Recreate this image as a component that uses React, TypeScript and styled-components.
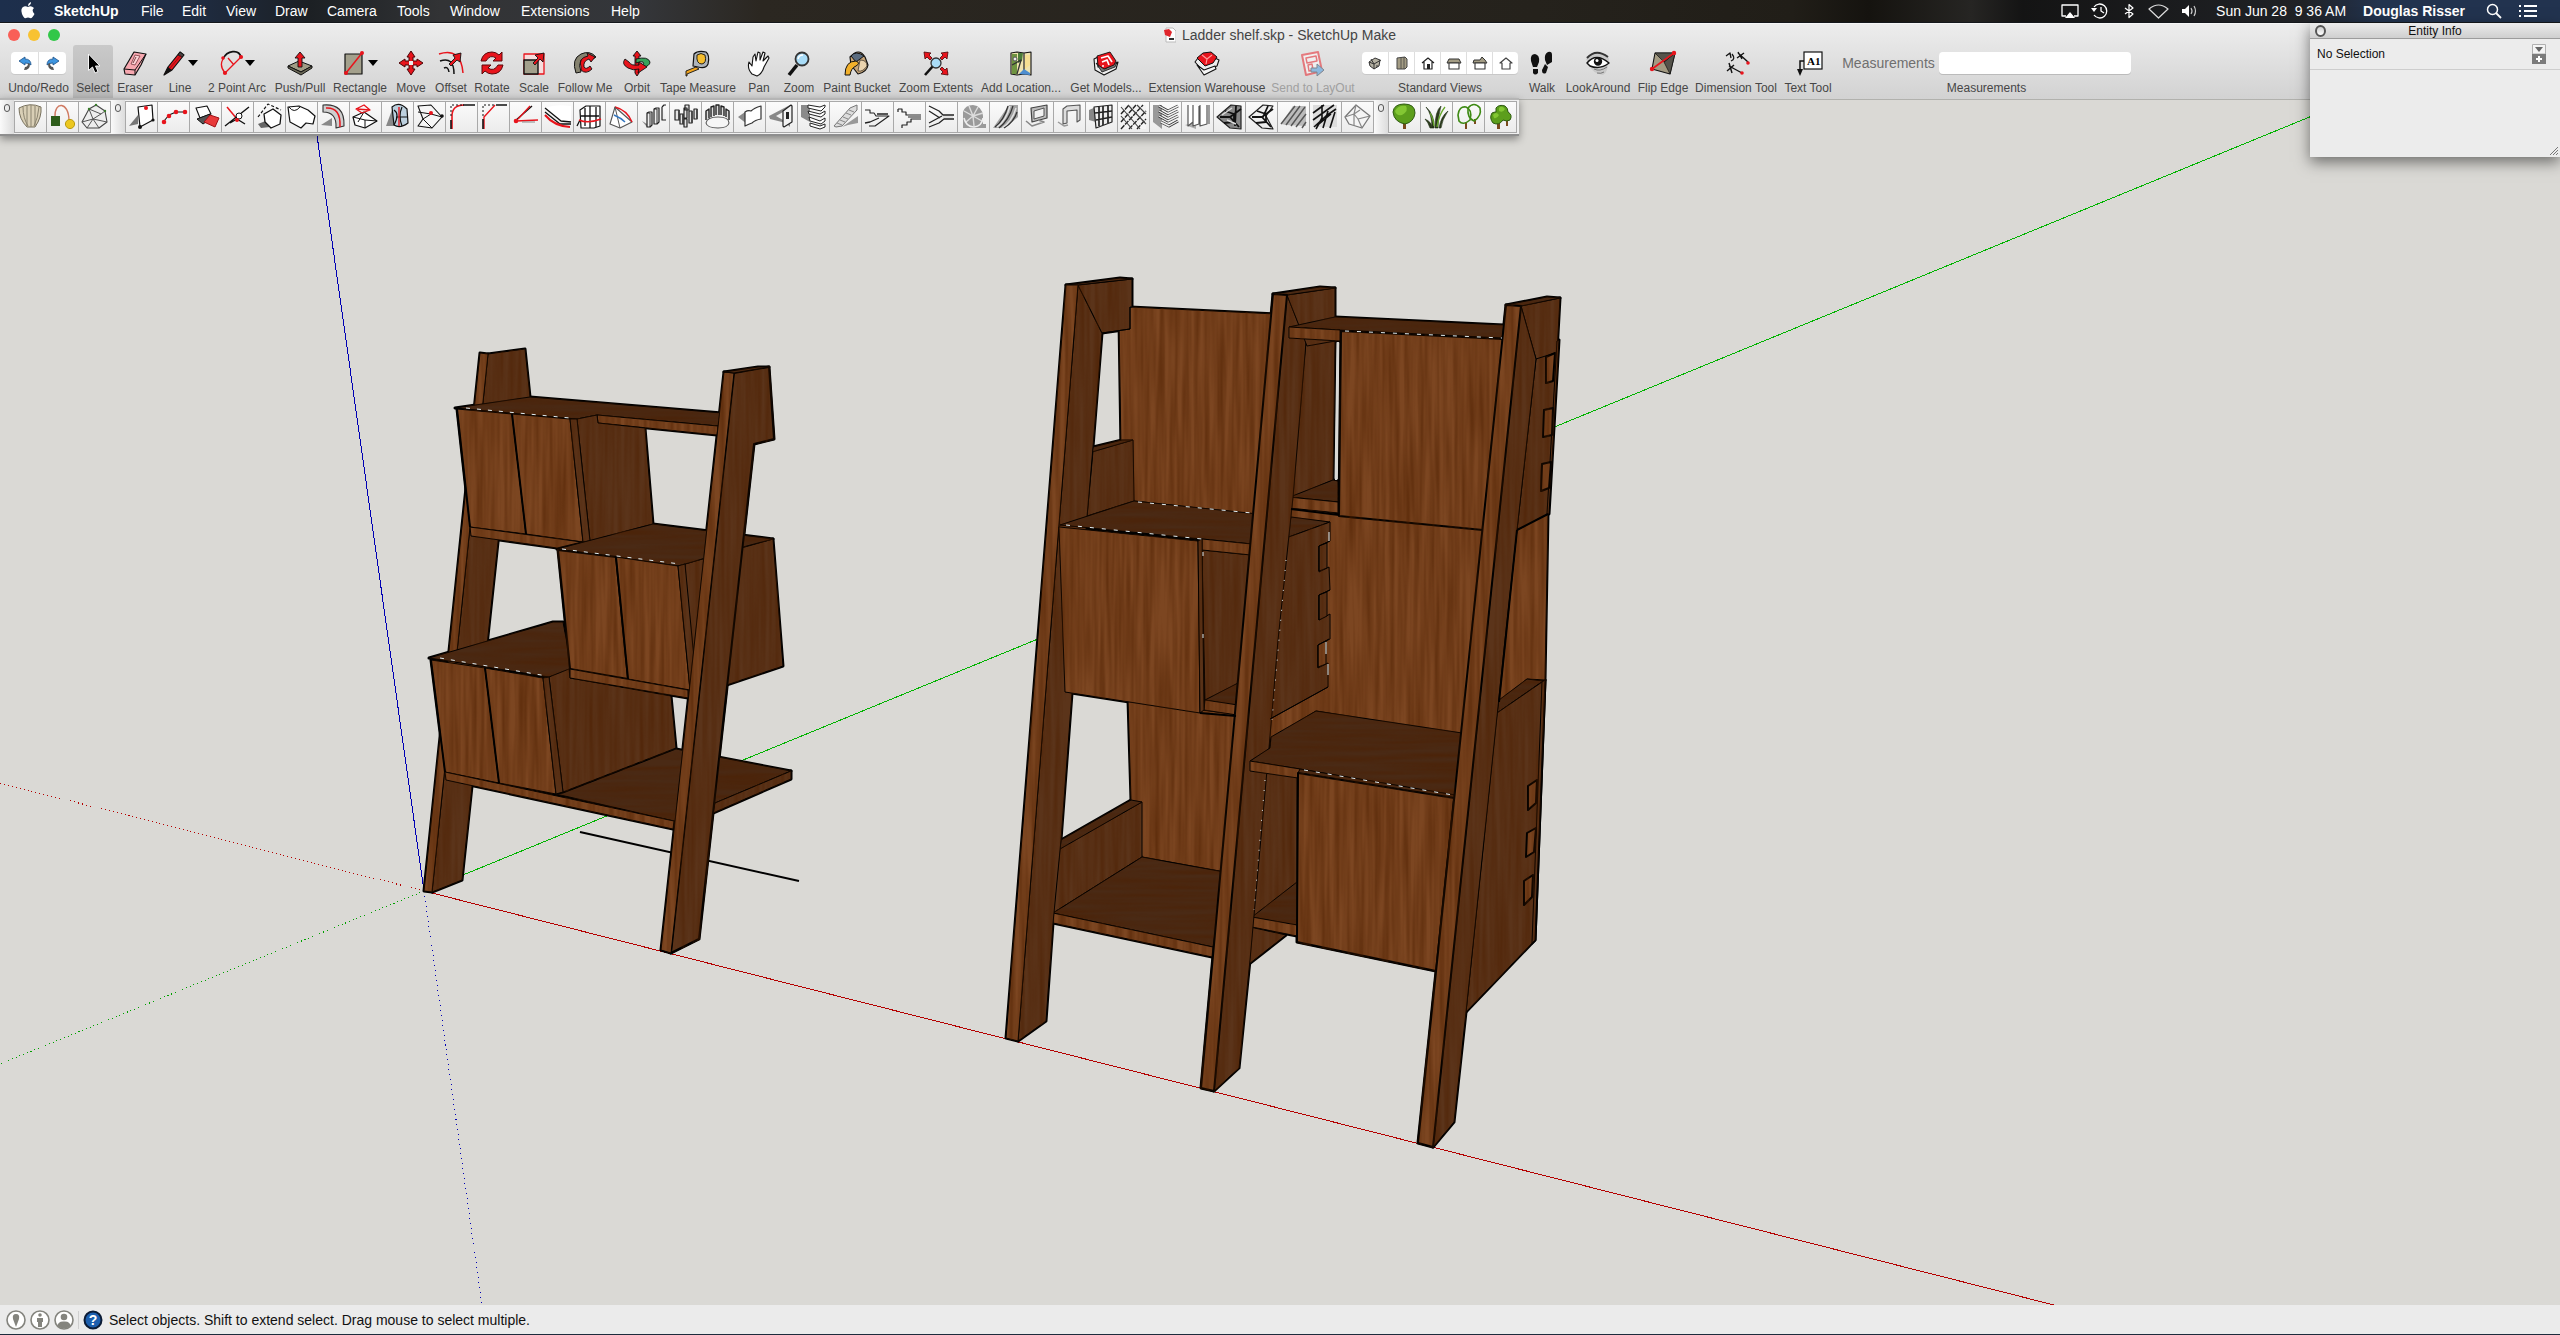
import React from 'react';
import styled, { createGlobalStyle } from 'styled-components';

const GlobalStyle = createGlobalStyle`
  *, *::before, *::after { box-sizing: border-box; }
  body {
    margin: 0;
    font-family: "Liberation Sans", Arial, Helvetica, sans-serif;
    font-size: 12px;
    color: #111;
    background: #dad9d5;
  }
  button, input {
    font: inherit;
    color: inherit;
    margin: 0;
    padding: 0;
    border: 0;
    background: none;
  }
  svg { display: block; }
`;

/* ---------- glyph drawing ---------- */

type Shape = [d: string, fill?: string, stroke?: string, width?: number, dash?: string];

const dot = (x: number, y: number, r: number) =>
  `M${x - r} ${y}a${r} ${r} 0 1 0 ${2 * r} 0a${r} ${r} 0 1 0 ${-2 * r} 0Z`;

const K = '#111';
const R = '#e8141c';
const N = 'none';

const Glyph = ({ shapes, w = 32, h = 28, dim = false }: { shapes: Shape[]; w?: number; h?: number; dim?: boolean }) => (
  <svg width={w} height={h} viewBox={`0 0 ${w} ${h}`} opacity={dim ? 0.5 : 1} aria-hidden="true">
    {shapes.map(([d, fill = N, stroke = N, width = 1, dash], i) => (
      <path key={i} d={d} fill={fill} stroke={stroke} strokeWidth={width} strokeDasharray={dash} strokeLinejoin="round" />
    ))}
  </svg>
);

const undoShapes: Shape[] = [
  ['M4 9L10 5V7Q16 7 16 13Q14 11 10 11V13Z', '#3f96e0', '#1b4f86', 0.8],
  ['M15 12Q15 18 9 18L10 15Q13 15 13 11Z', '#555'],
];
const redoShapes: Shape[] = [
  ['M16 9L10 5V7Q4 7 4 13Q6 11 10 11V13Z', '#3f96e0', '#1b4f86', 0.8],
  ['M5 12Q5 18 11 18L10 15Q7 15 7 11Z', '#555'],
];

const toolGlyphs: Record<string, Shape[]> = {
  select: [['M11.500 5V21.500L15.500 18L18 24L21 22.500L18.500 17H23Z', '#000', '#f6f6f6', 1]],
  eraser: [
    ['M5 20L15 3L27 5L22 16L16 26L6 25Z', '#f7a8b0', K, 1.2],
    ['M5 20L16 21L27 5M16 21V26', N, K, 1],
    ['M16 6L21 7L16 16L12 15Z', '#fbd3d6', '#7a3a40', 0.8],
    ['M17 8L14 14', N, '#7a3a40', 1],
  ],
  line: [
    ['M2 26L6 18L18 3L22 6L10 21Z', R, K, 1.2],
    ['M2 26L6 18L10 21Z', K],
    ['M18 3L22 6L20 8L16 6Z', '#444', K, 0.8],
    ['M8 19L19 6', N, '#8a0c10', 0.8],
  ],
  arc: [
    ['M4 10C8 1 20 0 22 8', N, K, 1.8],
    ['M4 10Q0 17 6 24M6 24L22 8M9 9L15 16', N, R, 1.3],
    [dot(22, 8, 2.1) + dot(6, 24, 2.1) + dot(4, 9, 1.8), R],
  ],
  push: [
    ['M4 17L15 12L28 17L17 23Z', '#a09c85', K, 1],
    ['M4 17V19L17 26L28 19V17L17 23Z', '#6c6957', K, 1],
    ['M14 18V9H11L16 3L21 9H18V18Z', R, K, 0.9],
  ],
  rect: [
    ['M3 5H20V25H3Z', '#a3a08c', K, 1.2],
    ['M4 24L20 4', N, R, 1.5],
    [dot(4, 24, 2) + dot(20, 4, 2), R],
  ],
  move: [
    ['M16 2L20 8H18V12H22V10L28 14L22 18V16H18V20H20L16 26L12 20H14V16H10V18L4 14L10 10V12H14V8H12Z', R, '#4a0507', 1],
    ['M14 12H18V16H14Z', '#eee'],
  ],
  offset: [
    ['M4 5Q26 -2 28 24', N, R, 1.5],
    ['M5 12Q19 7 19 25M9 19Q13 17 14 23', N, K, 1.5],
    ['M14 15L20 9L18 6L26 4L25 13L22 11L16 17Z', R, K, 0.9],
  ],
  rotate: [
    ['M5 12Q7 3 16 3Q20 3 23 6L26 3V12H17L20 9Q14 5 10 12Z', R, '#5a080b', 1],
    ['M27 16Q25 25 16 25Q12 25 9 22L6 25V16H15L12 19Q18 23 22 16Z', R, '#5a080b', 1],
  ],
  scale: [
    ['M6 5H26V25H6Z', '#f6dcdc', R, 1.3],
    ['M6 11H20V25H6Z', '#a3a08c', K, 1.4],
    ['M15 14L20 9L17 6L26 4L25 13L22 10L17 16Z', R, K, 0.9],
  ],
  follow: [
    ['M7 24Q2 10 12 5Q21 1 27 8L24 10Q18 6 12 11Q9 16 12 23Z', '#85826f', K, 1],
    ['M12 18Q9 9 19 7L18 4L26 8L22 13L20 10Q14 12 15 18Q17 21 21 17L23 20Q17 26 12 21Z', R, K, 0.9],
  ],
  orbit: [
    ['M16 2L20 7H18V24L16 27L14 24V7H12Z', R, K, 0.9],
    ['M15 10Q27 7 29 13Q29 17 21 19V16Q24 15 22 13Q20 12 15 14Z', '#3aa35b', K, 0.9],
    ['M4 10Q0 15 7 19Q12 22 18 20L17 24L26 18L18 13V16Q10 17 8 13Z', R, K, 0.9],
  ],
  tape: [
    ['M12 5Q16 1 24 3Q28 6 26 15Q24 20 16 18L11 17Z', '#aeb4ba', K, 1.2],
    ['M15 6Q19 3 23 6Q25 14 20 15Q14 15 15 6Z', '#f5bd2e', K, 0.9],
    ['M4 22L14 18L17 20L5 25V27H4Z', '#f2a51e', K, 0.9],
  ],
  pan: [['M9 25Q4 20 6 13L9 17L10 8L12 5L13 12L15 3L17 4L17 11L20 3L22 4L20 12L25 7L26 9L21 18Q19 25 14 27Z', '#fff', K, 1.1]],
  zoom: [
    ['M14 16L6 26', N, K, 3.6],
    [dot(19, 10, 6.5), '#a9dcf7', '#333', 1.8],
    ['M15 10Q16 6 20 6', N, '#fff', 1.5],
  ],
  bucket: [
    ['M9 8Q18 -2 24 8L27 16Q26 23 17 25L10 16Z', '#c9a77a', K, 1.2],
    ['M10 7Q15 1 23 7L15 13Z', '#5b6c80', K, 1],
    ['M19 11Q26 11 26 17Q22 23 17 22Z', '#ead3ae', K, 0.6],
    ['M4 26Q4 12 15 12Q20 14 15 17Q10 19 9 26Z', '#f2b02a', K, 1],
  ],
  extents: [
    ['M4 3L11 4L9 6L12 9L10 11L7 8L5 10Z M28 3L21 4L23 6L20 9L22 11L25 8L27 10Z M28 26L21 25L23 23L20 20L22 18L25 21L27 19Z', R, '#4a0507', 0.8],
    ['M13 17L5 26', N, K, 2.6],
    [dot(16, 14, 5), '#a9dcf7', '#333', 1.3],
  ],
  location: [
    ['M6 4L12 3L19 4L26 3V26L19 25L12 26L6 25Z', '#efe3b0', K, 1.1],
    ['M7 5H12V25H7Z', '#6f9440'],
    ['M13 4H18L17 12L13 14Z', '#4b7c39'],
    ['M7 16L16 11L12 25M19 4V25', N, '#333', 1.3],
    ['M20 6H25V16L20 20Z', '#f6df93'],
    ['M14 25L19 20L25 24V26Z', '#4e8ed0'],
    [dot(10, 10, 2), '#eee', '#555', 1],
  ],
  models: [
    ['M4 10L8 8V18L24 16L28 13L26 20L14 26L5 21Z', '#eee', K, 1.1],
    ['M6 14L12 23L25 18L27 13L15 20Z', '#777', K, 0.8],
    ['M7 7L20 3L26 12L24 16L14 20L8 16Z', R, K, 0.9],
    ['M11 9L18 7L22 13M12 13L17 11L19 16M12 17H14', N, '#fff', 1.7],
  ],
  warehouse: [
    ['M4 13L12 22L26 17L28 11L20 7L7 9Z', '#eee', K, 1.1],
    ['M6 16L13 26L25 20L24 17L13 21Z', '#f4f4f4', K, 1.1],
    ['M6 9L12 4L20 3L26 8L22 14L14 17Z', R, K, 1],
    ['M11 6L16 10L21 6M16 10L15 15', N, '#ff9a9a', 1.2],
  ],
  layout: [
    ['M5 6L21 3L25 22L9 26Z', '#fff', R, 2],
    ['M9 9L19 7L20 12L10 14Z M11 16L15 15L16 21L12 22Z', N, R, 1.5],
    ['M14 19H20V15L27 21L20 27V23H14Z', '#3f96e0', '#234', 1],
  ],
  walk: [
    ['M5 12Q4 5 9 5Q14 6 13 13L11 18H7Z M7 20H12V24Q9 27 7 24Z', K],
    ['M26 6Q26 2 22 3Q18 5 19 11L21 16L26 13Z M19 15L22 18L20 24Q16 26 16 21Z', K],
  ],
  look: [
    ['M4 10Q14 -2 27 9Q26 24 21 26Q10 24 8 17Z', '#c9c9c9'],
    ['M5 9Q14 -1 26 8', N, '#333', 2],
    ['M5 14Q14 3 27 14Q18 21 8 17Z', '#fff', K, 1.5],
    [dot(16, 12.5, 4.2), K],
    [dot(15, 11.5, 1.5), '#fff'],
    ['M12 20Q18 23 25 18M15 24Q19 25 22 23', N, '#777', 1],
  ],
  flip: [
    ['M8 4H28L23 25L5 20Z', '#a39a82', K, 1.1],
    ['M8 4L28 4L17 13Z M28 4L23 25L17 13Z', '#55534b', K, 0.7],
    ['M5 20L27 4', N, R, 1.7],
    [dot(5, 20, 2.2) + dot(27, 4, 2.2), R],
  ],
  dimension: [
    ['M9 17L22 24M18 4L28 13M9 14L12 24M7 22L14 16M17 9L24 4M18 3L22 10', N, K, 1.4],
    ['M6 7L10 4L11 9M11 12Q16 10 12 5', N, K, 1.3],
    [dot(22, 24, 1.8) + dot(28, 14, 1.8), R],
  ],
};

const viewGlyphs: { name: string; shapes: Shape[] }[] = [
  { name: 'Iso', shapes: [['M4 10L10 6L15 8L14 14L9 17L5 14Z', '#b5b1a2', '#333', 1], ['M4 10L9 12L16 8M9 12V17M6 7L9 12M12 13V15', N, '#333', 1]] },
  { name: 'Top', shapes: [['M5 6L13 5L15 7V15L13 17H5Z', '#a39c84', '#444', 1], ['M9 6V17M12 5V17', N, '#444', 0.8]] },
  { name: 'Front', shapes: [['M4 11L10 6L16 11M6 10V17H14V10', '#fff', '#222', 1.2], ['M9 12H12V17H9Z', '#222']] },
  { name: 'Right', shapes: [['M5 7H15L17 11H3Z', '#a39c84', '#333', 1], ['M5 11H15V17H5Z', '#fff', '#333', 1.1]] },
  { name: 'Back', shapes: [['M4 8H10L12 5L15 8L17 11H3Z', '#a39c84', '#333', 1], ['M5 11H15V17H5Z', '#fff', '#333', 1.1]] },
  { name: 'Left', shapes: [['M4 11L10 6L16 11H14V17H6V11Z', '#fff', '#444', 1.2]] },
];

const pluginGroups: Shape[][][] = [
  [
    [
      ['M4 6Q15 0 26 5Q27 15 20 25H12Q4 17 4 6Z', '#d9cfb6', '#77705d', 1],
      ['M8 5Q8 16 13 24M12 4V24M16 3V25M20 4V24M24 5Q23 16 19 24', N, '#8b8470', 1],
    ],
    [
      ['M8 15C7 -1 22 -1 22 19', N, '#d07a62', 1.4],
      ['M4 14H13V24H4Z', '#2d5c1a'],
      [dot(23, 22, 4.6), '#ecc720', '#b99a10', 1],
    ],
    [
      ['M3 20L10 7L17 3L26 9L28 20L20 26H8Z', '#eee', '#444', 1.1],
      ['M10 7L22 12L26 9M22 12L14 17L3 20M14 17L8 26M14 17L28 20M14 17L20 26M10 7L14 17', N, '#555', 1],
      [dot(10, 7, 1.2) + dot(26, 9, 1.2) + dot(17, 3, 1.2), '#3a7a2c'],
    ],
  ],
  [
    [['M3 24L12 13V22Z', '#777'], ['M12 5L26 3L27 18L14 25Z', '#fff', K, 1.2], [dot(14, 25, 2) + dot(27, 18, 1.6), K], [dot(20, 6, 2), R]],
    [['M6 19L11 13L18 10L27 10', N, K, 1.1], [dot(6, 20, 2.3) + dot(11, 14, 2.3) + dot(18, 10, 2.3) + dot(27, 10, 2.3), R]],
    [['M6 6L17 4L21 12L10 16Z', '#fff', K, 1.1], ['M7 17L20 12L19 18L13 22Z', '#555', K, 1], ['M14 20L20 13L29 16L25 25Z', '#e83a3a', '#a01015', 1]],
    [['M5 5L15 17', N, R, 1.5], ['M3 24L27 5M8 21L15 17L23 22', N, K, 1.4], [dot(17, 14, 3), '#fff', K, 1], [dot(15, 18, 2), R]],
    [['M4 15L14 2L27 8', N, K, 1.2, '3 2'], ['M4 22L14 18L16 25L7 26Z', '#666'], ['M10 12L19 7L27 13L26 22L17 26L11 20Z', '#fff', K, 1.3]],
    [['M3 13L2 5L13 4L22 8L29 14L27 22L20 21L15 26L4 20Z', '#fff', K, 1.2], ['M3 5Q8 12 14 5', N, K, 1]],
    [['M3 23L14 16V24Z', '#888'], ['M5 3Q27 1 26 24L18 26Q19 10 5 10Z', '#cfcfcf', '#333', 1.1], ['M8 6Q23 5 22 25', N, R, 1.5]],
    [['M3 15L14 10L27 19L15 26L5 23Z', '#fff', K, 1.2], ['M3 15L15 18L27 19M15 18V26M8 20L14 10', N, K, 1], ['M6 7L14 3L20 8L12 11Z M6 7L20 8', N, R, 1.3]],
    [['M4 24L10 8L17 24Z', '#888'], ['M10 5Q17 -1 25 7L26 21Q18 27 12 23Z', '#bcd0de', K, 1.2], ['M12 8Q18 12 12 23M20 5Q16 14 20 24M25 15H14', N, K, 1.2], ['M17 5V24', N, R, 1.4]],
    [['M4 4L17 3L28 15L18 26L4 24L9 17Z', '#f6f6f6', K, 1.1], ['M4 10L17 12L28 15M17 12L9 17L18 26', N, K, 1], [dot(17, 11, 2), R], [dot(28, 14, 1.8), K]],
    [['M6 27V14Q6 3 18 3', N, R, 1.6], ['M5 27V18M17 3H29', N, K, 1.6], ['M5 14V3H16', N, K, 1, '2 2']],
    [['M6 27V15L17 3', N, R, 1.4], ['M5 27V17M18 3H29', N, K, 1.6], ['M5 14V3H16', N, K, 1, '2 2']],
    [['M5 19L22 4', N, K, 1.4], ['M8 17L20 4M6 19L28 18', N, R, 1.3], ['M12 20L25 20', N, '#888', 1], [dot(6, 19, 2.3), R]],
    [['M4 6Q12 2 29 4V22Q13 19 4 6Z', '#fff'], ['M3 10L18 22H29M3 6L19 19L29 20', N, K, 1.3], ['M3 13Q12 24 28 25', N, R, 2]],
    [['M6 8L12 4L26 4V24L20 26H7Z', '#fff', K, 1.2], ['M11 6V24M16 4V26M22 5V25M3 24L6 18M7 14H25', N, K, 1.3], ['M5 18Q14 22 27 17', N, R, 1.6]],
    [['M4 22L9 5L26 20L14 26Z', '#fff', '#555', 1.1], ['M9 5Q21 8 26 20', N, R, 1.4], ['M9 5L14 26', N, '#555', 1], ['M8 13Q15 16 19 20', N, '#3477c0', 1.5]],
    [['M4 19L9 22V25Z', '#888'], ['M9 11L11 10H14V23L12 25H9ZM16 7L18 6H21V20L19 22H16ZM24 5L26 3H28M24 5V18H28', '#eee', '#222', 1.2], ['M9 11H12V25M16 7H19V22', N, '#222', 0.9]],
    [['M5 8H9V18H5ZM10 12H13V22H10ZM14 6H17V16H14ZM14 17H17V25H14ZM19 9H22V21H19ZM24 7H27V17H24ZM15 3H19V8H15Z', '#e4e4e4', '#222', 1.2], ['M9 8V18M13 12V22M22 9V21M27 7V17', N, '#444', 1.6]],
    [['M4 18V9L7 7V16M9 15V5L12 4V14M14 13V3H17V13M19 13V4L22 5V14M24 15V7L27 9V18', '#ddd', '#222', 1.4], ['M4 21Q5 15 16 15Q27 15 27 21Q26 26 16 26Q5 26 4 21Z', '#f6f6f6', '#555', 1.1]],
    [['M4 15L11 10L13 22Z', '#888'], ['M11 10Q14 8 17 9Q20 6 27 4V17Q21 18 18 21Q15 22 11 24Z', '#fff', '#333', 1.2]],
    [['M3 14L24 3V25L20 21L4 17Z', '#888'], ['M10 14L17 10V18Z', '#f0f0f0'], ['M17 9L25 3L26 4V20L18 25L17 24Z', '#f2f2f2', '#222', 1.2], ['M20 10H23V17H20Z', '#222']],
    [['M3 3H12V20L3 15Z', '#8a8a8a'], ['M10 3L22 5L27 3V5L23 9L10 6ZM10 9L22 12L27 9V12L23 15L11 12ZM11 15L22 19L27 16V19L23 22L12 19ZM12 21L22 24L27 22V25L22 27L12 24Z', '#fff', '#222', 1]],
    [['M12 25L28 14V21L18 23Z', '#999'], ['M4 24L20 6L27 3V8L12 24L6 25Z', '#ddd', '#777', 1], ['M7 21L12 23M10 18L15 20M13 15L18 17M16 11L21 13M19 8L24 10', N, '#888', 1]],
    [['M3 8H8V11H12L14 14H27L13 24H7', N, '#222', 1.1], ['M15 12H26M3 21L8 20L17 16', N, '#222', 1.3]],
    [['M4 7H8V10H12V13H27M4 7V10', N, '#222', 1.2], ['M27 17H17V20H13V23H8V26', N, '#222', 1.2], ['M14 15H27', N, '#888', 2]],
    [['M3 4L13 9L17 13H28M3 9L14 16M3 25L13 21L18 17H28M3 21L16 14', N, '#222', 1.3], ['M17 15H27', N, '#ddd', 1.6]],
    [['M5 26V10Q7 3 15 3Q24 4 25 14V22H28V26Z', '#9a9a9a'], ['M15 14L6 9M15 14L11 4M15 14L20 5M15 14L25 11M15 14L24 19M15 14L16 24M15 14L8 20', N, '#ddd', 1.4], ['M6 16Q8 25 16 25Q24 24 25 16', N, '#eee', 1.6]],
    [['M3 26L19 3H28V15L15 26Z', '#a2a2a2'], ['M5 25Q14 18 18 4M9 26Q19 18 23 4M14 26Q24 20 27 10', N, '#333', 1.2], ['M7 25Q16 19 20 4M12 26Q22 20 26 6', N, '#e2e2e2', 1.4]],
    [['M9 6L25 3V16L10 20Z', '#bbb', '#444', 1.2], ['M12 9L22 6V14L12 17Z', '#f2f2f2', '#555', 1], ['M4 19L10 24L22 20L16 18', N, '#888', 1.6]],
    [['M4 20L10 24L14 23', N, '#999', 1.5], ['M9 22V7L13 4L26 3V18L23 20V8L13 9V21Z', '#ddd', '#555', 1.1]],
    [['M3 8L10 5V20L3 18Z', '#888'], ['M8 5L26 3V20L10 26Z', '#eee', '#222', 1.2], ['M13 5V24M17 4V23M22 4V21M9 11L26 9M10 18L26 15', N, '#222', 1.7]],
    [['M3 3H28V27H3Z', '#f4f4f4'], ['M3 12L11 3M3 20L18 3M3 27L25 3M11 27L28 9M19 27L28 17', N, '#222', 1.4, '5 1'], ['M3 5L22 27M10 3L28 22M3 14L14 27M19 3L28 12', N, '#444', 1.1]],
    [['M3 3H12V27L3 20Z', '#999'], ['M9 4L18 9L28 4M9 9L18 14L28 9M9 14L18 19L28 14M11 20L19 24L28 19', N, '#333', 3], ['M9 4L18 9L28 4M9 9L18 14L28 9M9 14L18 19L28 14M11 20L19 24L28 19', N, '#eee', 1.4]],
    [['M3 23L14 20V27Z', '#aaa'], ['M6 3V24L11 20V3M11 3V24L17 22V4M18 3V24L25 22V3', '#fff', '#555', 1.2], ['M27 3V22', N, '#777', 1.4]],
    [['M3 15L17 3L27 4V27L16 26Z', '#888', '#222', 1.2], ['M6 15H16L27 7M16 15L25 25M11 9L20 12V20L10 21M22 4L21 24', N, '#111', 1.8], ['M8 13L18 6M13 18L22 22', N, '#ddd', 1.4]],
    [['M3 15L17 3L27 4L20 14L27 27L16 26Z', '#eee', '#222', 1.2], ['M6 15H16L27 7M16 15L25 25M11 9L20 12V20L10 21M22 4L17 15', N, '#111', 1.8]],
    [['M3 22L15 4H28V24L8 23Z', '#bbb'], ['M3 22L17 4M8 23L22 4M13 24L27 5M18 25L28 12M24 26L28 20', N, '#555', 1.4]],
    [['M3 3H27V25H3Z', '#ddd'], ['M3 11L14 3M3 18L24 3M4 25L16 14L26 7M6 27L12 16V3M13 26L18 9M20 26L25 10M9 22L21 12', N, '#111', 1.6]],
    [['M3 15L14 3L28 14L20 26L7 22Z', '#f5f5f5', '#777', 1.3], ['M3 15L12 12L14 3M12 12L18 8M12 12V24M28 14L16 17L12 12M16 17L20 26', N, '#888', 1.2]],
  ],
  [
    [['M14 19H17V27H14Z', '#7a4a1e'], ['M4 10Q5 2 15 2Q26 2 26 11Q25 20 16 22Q5 20 4 10Z', '#5c9e1c', '#2d5a10', 1], ['M6 9Q9 3 17 4Q20 9 13 13Q7 14 6 9Z', '#83c733']],
    [['M11 26Q11 12 5 5Q14 13 13 26ZM14 26Q14 9 20 4Q17 14 17 26ZM18 26Q20 14 27 9Q21 18 20 26ZM9 26Q7 20 4 17Q11 20 11 26Z', '#2c3a1c', '#1c2e12', 0.6], ['M16 25Q18 12 24 5M13 24Q12 16 9 11', N, '#66a82a', 1.3]],
    [['M13 20V27M22 17V22', N, '#7a4a1e', 2], ['M5 13Q6 4 13 5Q20 8 17 18Q10 24 6 19Z', N, '#3e8a14', 1.6], ['M15 6Q21 -1 27 6Q29 14 21 19Q14 16 15 6Z', N, '#3e8a14', 1.6]],
    [['M12 20H15V27H12ZM21 16H23V24H21Z', '#7a4a1e'], ['M11 6Q14 2 20 4Q23 6 23 10Q28 13 25 18Q22 20 18 18Q14 24 8 21Q4 16 7 11Q9 10 11 10Z', '#5c9e1c', '#2d5a10', 1], ['M8 13Q11 9 14 13Q12 17 9 16ZM14 6Q17 3 20 7Q18 11 14 9Z', '#83c733']],
  ],
];

/* ---------- menu bar ---------- */

const Page = styled.div`
  min-height: 100vh;
  display: flex;
  flex-direction: column;
`;

const MenuBar = styled.header`
  height: 23px;
  display: flex;
  justify-content: space-between;
  padding: 0 23px 0 20px;
  color: #fff;
  font-size: 14px;
  border-bottom: 1px solid #15181c;
  background: linear-gradient(90deg, #1d2f4c 0, #1f2d45 180px, #1c2024 310px, #323335 440px, #34363a 640px, #2b2721 760px, #25221c 60%, #211e18 70%, #15130f 73%, #262523 77%, #141414 79%, #202226 90%, #22334f 93%, #22334f 100%);
`;

const Menus = styled.nav`
  display: grid;
  grid-template-columns: 34px 87px 41px 44px 49px 52px 70px 53px 71px 90px 40px;
  align-items: center;
`;

const MenuButton = styled.button<{ $bold?: boolean }>`
  text-align: left;
  line-height: 22px;
  font-weight: ${(p) => (p.$bold ? 700 : 400)};
`;

const Extras = styled.div`
  display: flex;
  align-items: center;
  gap: 17px;
  line-height: 22px;
  white-space: pre;
`;

const ExtraIcons = styled.div`
  display: flex;
  align-items: center;
  gap: 12px;
`;

const UserButton = styled.button`
  font-weight: 700;
  margin-right: 4px;
`;

const W = '#fff';
const extraGlyphs: { name: string; w: number; shapes: Shape[] }[] = [
  { name: 'AirPlay', w: 18, shapes: [['M5 13H1V2H17V13H13', N, W, 1.3], ['M9 9L14 15H4Z', W]] },
  { name: 'Time Machine', w: 19, shapes: [['M3 4A7 7 0 1 1 3 12M10 4V8L13 10', N, W, 1.3], ['M0 5H6L3 9Z', W]] },
  { name: 'Bluetooth', w: 14, shapes: [['M3 5L11 11L7 14.500V1.500L11 5L3 11', N, W, 1.2]] },
  { name: 'Wi-Fi', w: 21, shapes: [['M1 6Q10.500 -2 20 6L10.500 15Z', N, '#ddd', 1.2]] },
  { name: 'Volume', w: 18, shapes: [['M1 6H4L8 2V14L4 10H1Z', W], ['M10 5Q12 8 10 11M13 3Q16 8 13 13', N, '#ccc', 1.2]] },
];

/* ---------- application window ---------- */

const WindowHead = styled.div`
  background: linear-gradient(#ededed, #d2d2d2);
  border-top: 1px solid #f6f6f6;
  border-bottom: 1px solid #b1b1ad;
  height: 77px;
`;

const TitleBar = styled.div`
  display: grid;
  grid-template-columns: 1fr auto 1fr;
  align-items: center;
  height: 21px;
  padding: 0 8px;
`;

const Lights = styled.div`
  display: flex;
  gap: 8px;
`;

const Light = styled.button<{ $color: string }>`
  width: 12px;
  height: 12px;
  border-radius: 50%;
  background: ${(p) => p.$color};
`;

const Title = styled.h1`
  display: flex;
  align-items: center;
  gap: 6px;
  margin: 0;
  font-size: 14px;
  line-height: 20px;
  font-weight: 400;
  color: #444;
`;

const Toolbar = styled.div`
  display: flex;
  height: 54px;
  padding-left: 4px;
  color: #464646;
`;

const ToolShell = styled.div<{ $w: number }>`
  width: ${(p) => p.$w}px;
  flex: none;
  display: flex;
  flex-direction: column;
  align-items: center;
  gap: 3px;
  padding-top: 4px;
`;

const ToolButton = styled(ToolShell).attrs({ as: 'button' })<{ $active?: boolean; $dim?: boolean }>`
  background: ${(p) => (p.$active ? 'rgba(0, 0, 0, 0.12)' : 'none')};
  border-radius: 3px 3px 0 0;
  color: ${(p) => (p.$dim ? '#a0a0a0' : 'inherit')};
`;

const ToolArt = styled.span`
  height: 28px;
  display: flex;
  align-items: center;
  justify-content: center;
`;

const ToolLabel = styled.span`
  line-height: 16px;
  white-space: nowrap;
`;

const Caret = styled.span`
  border: 5px solid transparent;
  border-top: 6px solid #000;
  border-bottom: 0;
`;

const Segments = styled.div`
  display: flex;
  height: 22px;
  border-radius: 4px;
  overflow: hidden;
  background: #fff;
  box-shadow: 0 1px 0 rgba(0, 0, 0, 0.08);
`;

const Segment = styled.button<{ $w: number }>`
  width: ${(p) => p.$w}px;
  display: flex;
  align-items: center;
  justify-content: center;
  & + & { border-left: 1px solid #dedede; }
`;

const MeasureRow = styled.div`
  height: 28px;
  display: flex;
  align-items: center;
  gap: 4px;
`;

const MeasureLabel = styled.label`
  font-size: 14px;
  line-height: 20px;
  color: #6f6f6f;
`;

const MeasureInput = styled.input`
  width: 192px;
  height: 22px;
  border-radius: 4px;
  background: #fff;
  box-shadow: 0 1px 0 #bbb;
`;

type Tool = { id: string; label: string; w: number; caret?: boolean; active?: boolean; dim?: boolean };

const toolsLeft: Tool[] = [
  { id: 'select', label: 'Select', w: 40, active: true },
  { id: 'eraser', label: 'Eraser', w: 44 },
  { id: 'line', label: 'Line', w: 46, caret: true },
  { id: 'arc', label: '2 Point Arc', w: 68, caret: true },
  { id: 'push', label: 'Push/Pull', w: 58 },
  { id: 'rect', label: 'Rectangle', w: 62, caret: true },
  { id: 'move', label: 'Move', w: 40 },
  { id: 'offset', label: 'Offset', w: 40 },
  { id: 'rotate', label: 'Rotate', w: 42 },
  { id: 'scale', label: 'Scale', w: 42 },
  { id: 'follow', label: 'Follow Me', w: 60 },
  { id: 'orbit', label: 'Orbit', w: 44 },
  { id: 'tape', label: 'Tape Measure', w: 78 },
  { id: 'pan', label: 'Pan', w: 44 },
  { id: 'zoom', label: 'Zoom', w: 36 },
  { id: 'bucket', label: 'Paint Bucket', w: 80 },
  { id: 'extents', label: 'Zoom Extents', w: 78 },
  { id: 'location', label: 'Add Location...', w: 92 },
  { id: 'models', label: 'Get Models...', w: 78 },
  { id: 'warehouse', label: 'Extension Warehouse', w: 124 },
  { id: 'layout', label: 'Send to LayOut', w: 88, dim: true },
];

const toolsRight: Tool[] = [
  { id: 'walk', label: 'Walk', w: 38 },
  { id: 'look', label: 'LookAround', w: 74 },
  { id: 'flip', label: 'Flip Edge', w: 56 },
  { id: 'dimension', label: 'Dimension Tool', w: 90 },
  { id: 'text', label: 'Text Tool', w: 54 },
];

const ToolItem = ({ tool }: { tool: Tool }) => (
  <ToolButton $w={tool.w} $active={tool.active} $dim={tool.dim} disabled={tool.dim}>
    <ToolArt>
      {tool.id === 'text' ? (
        <svg width="32" height="28" viewBox="0 0 32 28" aria-hidden="true">
          <rect x="12" y="3" width="18" height="17" fill="#fff" stroke={K} strokeWidth="1.2" />
          <path d="M12 12H8V21" fill="none" stroke={K} strokeWidth="1.5" />
          <path d="M5 20H11L8 27Z" fill={K} />
          <text x="15" y="16" fontFamily="Liberation Serif, serif" fontWeight="700" fontSize="11">A1</text>
        </svg>
      ) : (
        <Glyph shapes={toolGlyphs[tool.id]} w={tool.caret ? 26 : 32} dim={tool.dim} />
      )}
      {tool.caret && <Caret />}
    </ToolArt>
    <ToolLabel>{tool.label}</ToolLabel>
  </ToolButton>
);

/* ---------- drawing area ---------- */

const Stage = styled.main`
  position: relative;
  flex: 1;
  min-height: 400px;
  overflow: hidden;
  background: #dad9d5;
`;

const Scene = styled.svg`
  position: absolute;
  inset: 0;
  width: 100%;
  height: 100%;
`;

type Tone = 'front' | 'side' | 'top';
type Face = [tone: Tone, points: string, edge?: number];

const toneColor: Record<Tone, string> = { front: '#7c4621', side: '#5b341a', top: '#4a2a15' };

const smallShelf: Face[] = [
  ['side', '488,354 525,349 530,397 530,420 511,420 462,880 432,892'],
  ['front', '480,353 488,354 432,892 424,891'],
  ['top', '455,408 530,397 722,413 718,426 597,415 577,419'],
  ['front', '597,415 718,426 717,435 598,423'],
  ['side', '577,419 597,415 598,423 645,428 653,524 590,541'],
  ['front', '457,409 512,414 526,534 470,527'],
  ['front', '512,414 570,419 583,542 526,534'],
  ['side', '570,419 577,419 590,541 583,542'],
  ['front', '470,527 582,542 557,548 471,536'],
  ['top', '429,658 553,622 563,622 572,670 549,677'],
  ['top', '563,793 676,749 718,757 791,771 715,803 674,821 556,794'],
  ['side', '715,803 791,771 791,779 713,813'],
  ['side', '549,677 569,669 570,678 671,696 676,748 563,792'],
  ['front', '431,660 485,668 499,783 445,772'],
  ['front', '485,668 543,678 556,794 499,783'],
  ['side', '543,678 549,677 563,792 556,794'],
  ['front', '445,772 674,821 673,829 446,780'],
  ['side', '685,564 773,539 783,666 688,698'],
  ['top', '557,549 653,524 773,539 743,547 685,564 678,566'],
  ['front', '558,550 616,557 628,679 570,669', 2],
  ['front', '616,557 678,566 690,690 628,679'],
  ['side', '678,566 685,564 697,690 690,690'],
  ['front', '570,669 688,690 688,698 570,678'],
  ['side', '734,373 769,367 774,439 754,444 699,939 671,953', 2],
  ['front', '724,372 734,373 671,953 661,950'],
  ['top', '724,372 758,367 769,367 734,373'],
];

const largeShelf: Face[] = [
  ['front', '1119,320 1130,307 1276,314 1253,514 1134,501 1121,450'],
  ['side', '1093,451 1133,440 1134,501 1087,516'],
  ['top', '1093,447 1122,440 1133,440 1092,452'],
  ['front', '1128,700 1240,715 1225,872 1142,857 1131,800'],
  ['side', '1060,848 1142,802 1142,857 1053,913'],
  ['top', '1061,840 1131,800 1142,802 1060,849'],
  ['top', '1053,913 1142,857 1224,872 1213,947'],
  ['front', '1053,913 1213,947 1212,957 1053,923'],
  ['side', '1078,285 1102,333 1093,447 1072,693 1061,840 1053,923 1046,1021 1018,1041'],
  ['side', '1078,285 1132,279 1132,307 1130,307 1130,329 1102,333'],
  ['top', '1066,285 1120,278 1132,279 1078,285'],
  ['front', '1066,285 1078,285 1018,1041 1006,1038'],
  ['side', '1202,550 1252,555 1240,690 1205,700'],
  ['top', '1205,700 1240,682 1238,706'],
  ['front', '1205,700 1238,705 1237,715 1204,710'],
  ['top', '1060,525 1134,501 1258,514 1252,544 1202,539'],
  ['front', '1202,539 1252,544 1251,555 1202,550'],
  ['front', '1059,527 1198,541 1200,713 1065,692'],
  ['side', '1198,541 1202,539 1204,710 1200,713'],

  ['front', '1288,506 1339,514 1484,530 1462,735 1316,711 1269,740'],
  ['side', '1306,342 1335,341 1333,480 1290,498'],
  ['top', '1291,517 1330,522 1286,538'],
  ['side', '1286,538 1330,522 1330,541 1319,546 1319,572 1329,567 1330,590 1319,595 1319,620 1330,614 1330,639 1318,645 1318,668 1328,663 1328,687 1270,719'],
  ['side', '1319,546 1327,543 1327,568 1319,571'],
  ['side', '1319,595 1327,592 1327,616 1319,620'],
  ['front', '1318,645 1326,641 1326,664 1318,667'],
  ['side', '1250,927 1286,935 1249,964'],
  ['side', '1264,770 1297,775 1297,890 1252,918'],
  ['top', '1252,917 1297,882 1297,926'],
  ['front', '1252,917 1297,925 1297,936 1252,927'],
  ['top', '1290,497 1333,480 1338,481 1338,502'],
  ['front', '1289,497 1338,502 1338,513 1289,508'],
  ['side', '1287,295 1306,342 1293,497 1278,640 1269,748 1250,960 1239,1068 1214,1091'],
  ['side', '1287,295 1335,288 1335,341 1307,346'],
  ['top', '1273,294 1320,287 1335,288 1287,295'],
  ['front', '1273,294 1287,295 1214,1091 1201,1088', 2],
  ['top', '1289,327 1335,317 1504,325 1502,338 1340,330'],
  ['front', '1289,327 1340,330 1340,341 1289,338'],
  ['front', '1341,331 1503,339 1483,530 1339,516', 2],
  ['top', '1250,761 1270,748 1271,737 1316,711 1462,733 1455,796 1300,769'],
  ['front', '1250,761 1300,769 1298,778 1250,771'],
  ['top', '1300,769 1455,795 1454,798 1298,773'],
  ['front', '1298,773 1454,798 1436,971 1297,942', 2],
  ['front', '1517,530 1548,514 1545,680 1527,679 1499,702'],
  ['top', '1499,700 1527,679 1543,681 1497,713'],
  ['side', '1497,713 1542,682 1545,680 1535,940 1466,1012'],
  ['side', '1542,682 1545,680 1535,940 1532,943'],
  ['front', '1528,786 1537,780 1536,803 1528,810', 2],
  ['front', '1527,833 1536,828 1534,852 1526,857', 2],
  ['front', '1524,881 1533,875 1532,897 1524,905', 2],
  ['side', '1521,306 1560,298 1548,514 1517,530 1536,359'],
  ['side', '1557,341 1559,340 1549,514 1547,514'],
  ['front', '1546,357 1555,353 1553,381 1546,383', 2],
  ['front', '1544,410 1553,408 1552,435 1543,437', 2],
  ['front', '1542,464 1551,462 1549,488 1541,491', 2],
  ['side', '1521,306 1536,359 1517,530 1505,640 1466,1012 1454,1122 1433,1147'],
  ['top', '1506,305 1547,297 1560,298 1521,306'],
  ['front', '1506,305 1521,306 1433,1147 1418,1143', 2],
];

const Faces = ({ faces }: { faces: Face[] }) => (
  <>
    <g fill="#000" stroke="#000" strokeWidth="3" strokeLinejoin="round">
      {faces.map(([, points], i) => (
        <polygon key={i} points={points} />
      ))}
    </g>
    <g stroke="#000" strokeLinejoin="round">
      {faces.map(([tone, points, edge = 1], i) => (
        <polygon key={i} points={points} fill={toneColor[tone]} strokeWidth={edge} filter={tone === 'top' ? 'url(#grainFlat)' : 'url(#grainTall)'} />
      ))}
    </g>
  </>
);

const Grain = ({ id, freq }: { id: string; freq: string }) => (
  <filter id={id} x="0" y="0" width="2560" height="1335" filterUnits="userSpaceOnUse" colorInterpolationFilters="sRGB">
    <feTurbulence type="fractalNoise" baseFrequency={freq} numOctaves="2" seed="4" result="noise" />
    <feColorMatrix in="noise" type="matrix" values="0 0 0 0 0.3  0 0 0 0 0.12  0 0 0 0 0  1 0 0 0 -0.28" result="tint" />
    <feComposite in="tint" in2="SourceGraphic" operator="in" result="cut" />
    <feMerge>
      <feMergeNode in="SourceGraphic" />
      <feMergeNode in="cut" />
    </feMerge>
  </filter>
);

const Model = () => (
  <Scene viewBox="0 100 2560 1205" preserveAspectRatio="xMinYMin slice" role="img" aria-label="Ladder shelf model">
    <defs>
      <Grain id="grainTall" freq="0.2 0.009" />
      <Grain id="grainFlat" freq="0.01 0.2" />
    </defs>
    <g fill="none" shapeRendering="crispEdges">
      <path d="M424 891L312 100" stroke="#0000b4" />
      <path d="M424 891L482 1305" stroke="#0000b4" strokeDasharray="1 4" />
      <path d="M424 891L2054 1305" stroke="#b40000" />
      <path d="M424 891L0 783" stroke="#b40000" strokeDasharray="1 3" />
      <path d="M424 891L2312 116" stroke="#00b400" />
      <path d="M424 891L0 1064" stroke="#00a000" strokeDasharray="1 3" />
    </g>
    <path d="M580 832L799 881" stroke="#000" strokeWidth="2" />
    <Faces faces={smallShelf} />
    <Faces faces={largeShelf} />
    <polygon points="1337,342 1339,342 1337,480 1335,480" fill="#dad9d5" />
    <g fill="none" stroke="#000" strokeWidth="2">
      <path d="M512 414L526 534M485 668L499 783M616 557L628 679M457 409L470 527M431 660L445 772" />
      <path d="M1517 530L1548 514M1291 509L1339 515M1517 530L1499 702M1200 713L1236 716" />
      <path d="M1319 571V546L1330 541M1319 620V595L1330 590M1318 668V645L1329 639M1270 719L1328 687" strokeWidth="1" />
      <path d="M1536 359L1555 353M1130 307V329L1102 333" strokeWidth="1" />
    </g>
    <g fill="none" stroke="#e2eef2" strokeWidth="1">
      <path d="M466 408L570 418M562 549L680 564M440 658L547 676" strokeDasharray="4 7" />
      <path d="M1066 525L1202 539M1138 502L1252 513M1345 331L1502 338M1304 770L1453 795" strokeDasharray="4 8" />
      <path d="M1286 560L1272 720M1265 780L1254 910" strokeDasharray="1 9" />
      <path d="M1329 532V541M1326 642V654M1328 664V675M1203 552V556M1203 634V638" />
    </g>
  </Scene>
);

const PluginBar = styled.div`
  position: absolute;
  top: -2px;
  left: 0;
  display: flex;
  height: 38px;
  padding-right: 2px;
  background: #f0f0f0;
  border-top: 2px solid #b5b5b5;
  border-bottom: 2px solid #8e8e8e;
  box-shadow: 0 3px 8px rgba(0, 0, 0, 0.4);
`;

const PluginGroup = styled.div`
  display: flex;
`;

const CloseGrip = styled.button`
  width: 14px;
  display: flex;
  justify-content: center;
  padding-top: 4px;
  background: linear-gradient(90deg, #fafafa, #dcdcdc);
  &::before {
    content: "";
    width: 6px;
    height: 8px;
    border: 1px solid #555;
    border-radius: 3px;
  }
`;

const PluginCells = styled.div`
  display: flex;
  align-self: center;
  height: 32px;
  border: 1px solid #a9a9a9;
  border-right: 0;
`;

const PluginButton = styled.button`
  width: 32px;
  border-right: 1px solid #a9a9a9;
  background: linear-gradient(#fbfbfb, #ececec);
  overflow: hidden;
`;

const Panel = styled.aside`
  position: absolute;
  z-index: 2;
  top: -77px;
  right: 0;
  width: 250px;
  height: 134px;
  background: #ececec;
  box-shadow: 0 5px 14px rgba(0, 0, 0, 0.5);
`;

const PanelTitle = styled.div`
  display: grid;
  grid-template-columns: 12px 1fr 12px;
  align-items: center;
  height: 16px;
  padding: 0 5px;
  text-align: center;
  background: linear-gradient(#ececec, #cfcfcf);
  border-bottom: 1px solid #9c9c9c;
`;

const PanelClose = styled.button`
  width: 11px;
  height: 12px;
  border: 2px solid #555;
  border-radius: 50%;
  background: linear-gradient(#ccc, #fff);
`;

const PanelRow = styled.div`
  display: flex;
  justify-content: space-between;
  align-items: center;
  height: 31px;
  padding: 0 14px 0 7px;
  border-bottom: 1px solid #cdcdcd;
`;

const PanelGrip = styled.div`
  position: absolute;
  right: 1px;
  bottom: 1px;
`;

const StageLayer = styled.div`
  position: relative;
  display: flex;
  flex: 1;
`;

/* ---------- status bar ---------- */

const StatusBar = styled.footer`
  display: flex;
  align-items: center;
  gap: 4px;
  height: 30px;
  padding: 1px 6px 0;
  background: #ebebeb;
  border-bottom: 1px solid #1c2b3c;
  font-size: 14px;
`;

const StatusRule = styled.span`
  width: 1px;
  height: 18px;
  background: #cfcfcf;
`;

const StatusText = styled.span`
  padding-left: 2px;
  line-height: 18px;
`;

const statusGlyphs: { name: string; shapes: Shape[] }[] = [
  { name: 'Geo-location', shapes: [['M10 17L7 9Q6 4 10 4Q14 4 13 9Z', '#84847e']] },
  { name: 'Credits', shapes: [[dot(10, 5, 1.8), '#84847e'], ['M7 8H13V12H12V17H8V12H7Z', '#84847e']] },
  { name: 'Sign in', shapes: [[dot(10, 7, 3.3), '#84847e'], ['M3.500 16Q4 11 10 11.500Q16 11 16.500 16Q10 21 3.500 16Z', '#84847e']] },
];

export default function App() {
  return (
    <Page>
      <GlobalStyle />
      <MenuBar>
        <Menus>
          <MenuButton aria-label="Apple">
            <Glyph
              w={16}
              h={18}
              shapes={[
                ['M8 5Q11 3 14 6Q11 8 14.500 12Q12 17 10 16Q8 15 6 16Q4 17 2 12Q0 6 4 4.500Q6 4 8 5Z', '#fff'],
                ['M8 4Q8 1 11 0Q11 3 8 4Z', '#fff'],
              ]}
            />
          </MenuButton>
          <MenuButton $bold>SketchUp</MenuButton>
          {['File', 'Edit', 'View', 'Draw', 'Camera', 'Tools', 'Window', 'Extensions', 'Help'].map((m) => (
            <MenuButton key={m}>{m}</MenuButton>
          ))}
        </Menus>
        <Extras>
          <ExtraIcons>
            {extraGlyphs.map((g) => (
              <button key={g.name} aria-label={g.name}>
                <Glyph shapes={g.shapes} w={g.w} h={16} />
              </button>
            ))}
          </ExtraIcons>
          <span>Sun Jun 28  9 36 AM</span>
          <UserButton>Douglas Risser</UserButton>
          <button aria-label="Spotlight">
            <Glyph w={16} h={16} shapes={[[dot(6.5, 6.5, 5), N, W, 1.5], ['M10 10L15 15', N, W, 1.8]]} />
          </button>
          <button aria-label="Notification Center">
            <Glyph w={18} h={16} shapes={[['M0 3H2M5 3H18M0 8H2M5 8H18M0 13H2M5 13H18', N, W, 2]]} />
          </button>
        </Extras>
      </MenuBar>

      <WindowHead>
        <TitleBar>
          <Lights>
            <Light $color="#f95f57" aria-label="Close" />
            <Light $color="#f8c232" aria-label="Minimize" />
            <Light $color="#32c748" aria-label="Zoom window" />
          </Lights>
          <Title>
            <Glyph
              w={12}
              h={16}
              shapes={[
                ['M2 1H9L12 4V15H2Z', '#fff', '#bbb', 1],
                ['M0 3L5 2L8 5L6 10L1 8Z', '#e0262c'],
                ['M5 12H10', N, '#333', 2],
              ]}
            />
            Ladder shelf.skp - SketchUp Make
          </Title>
        </TitleBar>
        <Toolbar>
          <ToolShell $w={69}>
            <ToolArt>
              <Segments>
                <Segment $w={27} aria-label="Undo"><Glyph shapes={undoShapes} w={20} h={22} /></Segment>
                <Segment $w={28} aria-label="Redo"><Glyph shapes={redoShapes} w={20} h={22} /></Segment>
              </Segments>
            </ToolArt>
            <ToolLabel>Undo/Redo</ToolLabel>
          </ToolShell>
          {toolsLeft.map((t) => <ToolItem key={t.id} tool={t} />)}
          <ToolShell $w={166}>
            <ToolArt>
              <Segments>
                {viewGlyphs.map((v) => (
                  <Segment key={v.name} $w={26} aria-label={v.name}><Glyph shapes={v.shapes} w={20} h={22} /></Segment>
                ))}
              </Segments>
            </ToolArt>
            <ToolLabel>Standard Views</ToolLabel>
          </ToolShell>
          {toolsRight.map((t) => <ToolItem key={t.id} tool={t} />)}
          <ToolShell $w={303}>
            <MeasureRow>
              <MeasureLabel htmlFor="measurements">Measurements</MeasureLabel>
              <MeasureInput id="measurements" />
            </MeasureRow>
            <ToolLabel>Measurements</ToolLabel>
          </ToolShell>
        </Toolbar>
      </WindowHead>

      <StageLayer>
        <Stage>
          <Model />
        </Stage>
        <PluginBar>
          {pluginGroups.map((group, g) => (
            <PluginGroup key={g}>
              <CloseGrip aria-label="Close toolbar" />
              <PluginCells>
                {group.map((shapes, i) => (
                  <PluginButton key={i} aria-label={`Plugin tool ${g + 1}.${i + 1}`}>
                    <Glyph shapes={shapes} w={31} h={30} />
                  </PluginButton>
                ))}
              </PluginCells>
            </PluginGroup>
          ))}
        </PluginBar>
        <Panel>
          <PanelTitle>
            <PanelClose aria-label="Close panel" />
            <span>Entity Info</span>
          </PanelTitle>
          <PanelRow>
            <span>No Selection</span>
            <button aria-label="Show details">
              <Glyph
                w={14}
                h={20}
                shapes={[
                  ['M.5 .5H13.500V10H.5Z', '#f4f4f4', '#b0b0b0', 1],
                  ['M3 3H11L7 8Z', '#666'],
                  ['M0 10H14V20H0Z', '#7b7b7b'],
                  ['M7 12V18M4 15H10', N, '#fff', 2],
                ]}
              />
            </button>
          </PanelRow>
          <PanelGrip>
            <Glyph w={10} h={10} shapes={[['M1 9L9 1M4 9L9 4M7 9L9 7', N, '#777', 1]]} />
          </PanelGrip>
        </Panel>
      </StageLayer>

      <StatusBar>
        {statusGlyphs.map((s) => (
          <button key={s.name} aria-label={s.name}>
            <Glyph w={20} h={20} shapes={[[dot(10, 10, 9), '#fff', '#84847e', 1.6], ...s.shapes]} />
          </button>
        ))}
        <StatusRule />
        <button aria-label="Help">
          <svg width="20" height="20" viewBox="0 0 20 20" aria-hidden="true">
            <circle cx="10" cy="10" r="8.5" fill="#1d5fae" stroke="#0c1c36" strokeWidth="2" />
            <text x="10" y="15" textAnchor="middle" fontSize="14" fontWeight="700" fill="#fff">?</text>
          </svg>
        </button>
        <StatusText>Select objects. Shift to extend select. Drag mouse to select multiple.</StatusText>
      </StatusBar>
    </Page>
  );
}
